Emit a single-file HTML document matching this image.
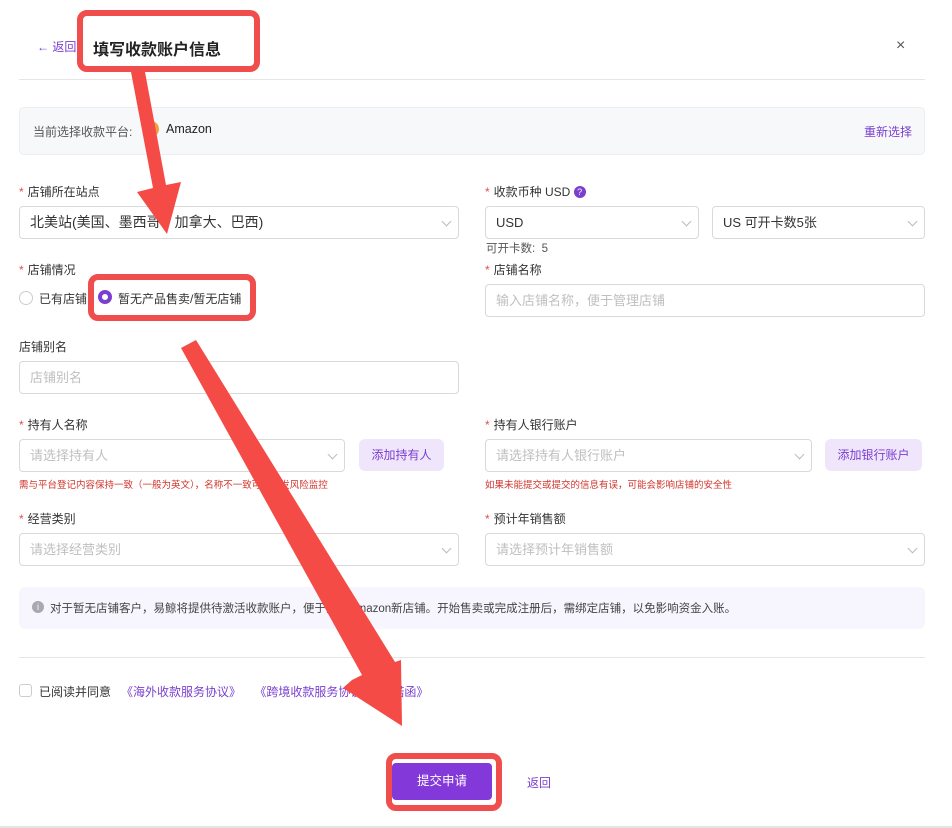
<!DOCTYPE html>
<html><head><meta charset="utf-8"><style>
*{box-sizing:border-box;margin:0;padding:0}
body{width:952px;height:828px;background:#fff;position:relative;overflow:hidden;font-family:"Liberation Sans","Noto Sans CJK SC",sans-serif;font-size:12px;color:#333}
.a{position:absolute;white-space:nowrap}
.lbl{font-size:12px;color:#333}
.lbl b{color:#e34d4d;font-weight:normal;margin-right:4px}
.in{position:absolute;border:1px solid #d9d9d9;border-radius:4px;background:#fff;height:33px;font-size:13px;padding:0 10px;line-height:31px;color:#333}
.ph{color:#bfbfbf}
.chev{position:absolute;right:8px;top:11px;width:7px;height:7px;border-right:1px solid #bbb;border-bottom:1px solid #bbb;transform:rotate(45deg)}
.btn2{position:absolute;background:#f0e6fb;color:#7a3fcf;border-radius:6px;height:32px;line-height:32px;font-size:12px;text-align:center}
.err{font-size:9.5px;color:#d0342c}
.hl{position:absolute;border:6px solid #f04d4d;border-radius:10px}
</style></head><body>
<div class="a" style="left:37px;top:38px;color:#7a3fcf;font-size:12px">← 返回</div>
<div class="a" style="left:896px;top:37px;font-size:16px;color:#555">×</div>
<div class="a" style="left:19px;top:79px;width:906px;height:1px;background:#e6e6e6"></div>
<div class="a" style="left:19px;top:107px;width:906px;height:48px;background:#f7f8fa;border:1px solid #eceef1;border-radius:5px"></div>
<div class="a" style="left:33px;top:123px;color:#555">当前选择收款平台:</div>
<div class="a" style="left:143px;top:121px;width:16px;height:16px;border-radius:50%;background:#f0a040"></div>
<div class="a" style="left:166px;top:122px;font-size:12.5px;color:#222">Amazon</div>
<div class="a" style="left:864px;top:123px;color:#7a3fcf">重新选择</div>

<div class="a lbl" style="left:19px;top:183px"><b>*</b>店铺所在站点</div>
<div class="in" style="left:19px;top:206px;width:440px;font-size:14px">北美站(美国、墨西哥、加拿大、巴西)<span class="chev"></span></div>
<div class="a lbl" style="left:19px;top:261px"><b>*</b>店铺情况</div>
<div class="a" style="left:19px;top:291px;width:14px;height:14px;border:1px solid #ccc;border-radius:50%"></div>
<div class="a" style="left:39px;top:290px;font-size:12px">已有店铺</div>
<div class="a" style="left:98px;top:290px;width:14px;height:14px;border:4px solid #7a3fcf;border-radius:50%"></div>
<div class="a" style="left:118px;top:290px;font-size:12px">暂无产品售卖/暂无店铺</div>

<div class="a lbl" style="left:485px;top:183px"><b>*</b>收款币种 USD <span style="display:inline-block;width:12px;height:12px;border-radius:50%;background:#7a3fcf;color:#fff;font-size:9px;text-align:center;line-height:12px;vertical-align:1px">?</span></div>
<div class="in" style="left:485px;top:206px;width:214px;font-size:13px">USD<span class="chev"></span></div>
<div class="in" style="left:712px;top:206px;width:213px;font-size:13px">US 可开卡数5张<span class="chev"></span></div>
<div class="a" style="left:486px;top:240px;font-size:11.5px;color:#555">可开卡数:&nbsp; 5</div>
<div class="a lbl" style="left:485px;top:261px"><b>*</b>店铺名称</div>
<div class="in ph" style="left:485px;top:284px;width:440px">输入店铺名称，便于管理店铺</div>

<div class="a lbl" style="left:19px;top:338px">店铺别名</div>
<div class="in ph" style="left:19px;top:361px;width:440px">店铺别名</div>

<div class="a lbl" style="left:19px;top:416px"><b>*</b>持有人名称</div>
<div class="in ph" style="left:19px;top:439px;width:326px">请选择持有人<span class="chev"></span></div>
<div class="btn2" style="left:359px;top:439px;width:85px">添加持有人</div>
<div class="a err" style="left:19px;top:477px">需与平台登记内容保持一致（一般为英文），名称不一致可能触发风险监控</div>
<div class="a lbl" style="left:485px;top:416px"><b>*</b>持有人银行账户</div>
<div class="in ph" style="left:485px;top:439px;width:327px">请选择持有人银行账户<span class="chev"></span></div>
<div class="btn2" style="left:825px;top:439px;width:97px">添加银行账户</div>
<div class="a err" style="left:485px;top:477px">如果未能提交或提交的信息有误，可能会影响店铺的安全性</div>

<div class="a lbl" style="left:19px;top:510px"><b>*</b>经营类别</div>
<div class="in ph" style="left:19px;top:533px;width:440px">请选择经营类别<span class="chev"></span></div>
<div class="a lbl" style="left:485px;top:510px"><b>*</b>预计年销售额</div>
<div class="in ph" style="left:485px;top:533px;width:440px">请选择预计年销售额<span class="chev"></span></div>

<div class="a" style="left:19px;top:587px;width:906px;height:42px;background:#f7f5fd;border-radius:6px"></div>
<div class="a" style="left:32px;top:601px;width:12px;height:12px;border-radius:50%;background:#a8a8b0;color:#fff;font-size:9px;text-align:center;line-height:12px">i</div>
<div class="a" style="left:50px;top:600px;font-size:11.5px;color:#444">对于暂无店铺客户，易鲸将提供待激活收款账户，便于注册Amazon新店铺。开始售卖或完成注册后，需绑定店铺，以免影响资金入账。</div>
<div class="a" style="left:19px;top:657px;width:906px;height:1px;background:#e6e6e6"></div>
<div class="a" style="left:19px;top:684px;width:13px;height:13px;border:1px solid #ccc;border-radius:3px"></div>
<div class="a" style="left:39px;top:683px;font-size:12px">已阅读并同意 &nbsp;&nbsp;<span style="color:#7a3fcf">《海外收款服务协议》 &nbsp;&nbsp; 《跨境收款服务协议》《承诺函》</span></div>

<div class="a" style="left:392px;top:763px;width:100px;height:37px;background:#8338d9;border-radius:4px;color:#fff;font-size:12.5px;text-align:center;line-height:37px">提交申请</div>
<div class="a" style="left:527px;top:774px;color:#7a3fcf;font-size:12px">返回</div>
<div class="a" style="left:0;top:826px;width:952px;height:2px;background:#e4e4e4"></div>

<div class="a" style="left:83px;top:14px;width:173px;height:55px;background:#fff"></div>
<div class="a" style="left:93px;top:36px;font-size:16px;font-weight:bold;color:#222">填写收款账户信息</div>
<div class="hl" style="left:77px;top:10px;width:183px;height:62px"></div>
<div class="hl" style="left:88px;top:274px;width:168px;height:47px"></div>
<div class="hl" style="left:386px;top:753px;width:116px;height:58px"></div>

<svg class="a" style="left:0;top:0" width="952" height="828">
<polygon fill="#f44b47" points="131,72 145,72 166,185 181,182 167,234 137,192 153,188"/>
<polygon fill="#f44b47" points="181,348 196,340 395,662 401,660 402,726 343,688 352,680 362,675"/>
</svg>
</body></html>
